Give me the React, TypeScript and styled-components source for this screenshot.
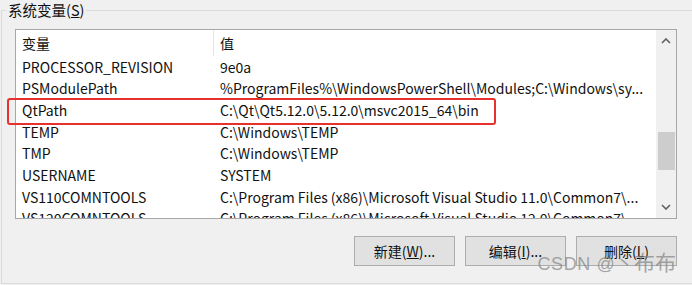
import styled, {createGlobalStyle} from 'styled-components'

const GlobalStyle = createGlobalStyle`
  html, body{
    margin: 0;
    padding: 0;
    background: #f0f0f0;
  }
  body{
    width: 692px;
    height: 285px;
    overflow: hidden;
    font-family: "Noto Sans CJK SC", "Noto Sans", sans-serif;
    color: #111;
  }
`

const rows: [string, string][] = [
  ['PROCESSOR_REVISION', '9e0a'],
  ['PSModulePath', '%ProgramFiles%\\WindowsPowerShell\\Modules;C:\\Windows\\sy...'],
  ['QtPath', 'C:\\Qt\\Qt5.12.0\\5.12.0\\msvc2015_64\\bin'],
  ['TEMP', 'C:\\Windows\\TEMP'],
  ['TMP', 'C:\\Windows\\TEMP'],
  ['USERNAME', 'SYSTEM'],
  ['VS110COMNTOOLS', 'C:\\Program Files (x86)\\Microsoft Visual Studio 11.0\\Common7\\...'],
  ['VS120COMNTOOLS', 'C:\\Program Files (x86)\\Microsoft Visual Studio 12.0\\Common7\\...'],
]

export default function App() {
  return (
    <Page>
      <GlobalStyle />
      <Group>
        <Legend>系统变量(<u>S</u>)</Legend>
        <Content>
          <ListBox>
            <Table>
              <HeaderRow>
                <NameCell>变量</NameCell>
                <ValueCell $divider>值</ValueCell>
              </HeaderRow>
              {rows.map(([name, value]) => (
                <Row key={name}>
                  <NameCell>{name}</NameCell>
                  <ValueCell>{value}</ValueCell>
                </Row>
              ))}
            </Table>
            <ScrollBar>
              <Arrow>
                <svg width="10" height="6" viewBox="0 0 10 6"><path d="M1 5 L5 1 L9 5" fill="none" stroke="#606060" strokeWidth="1.6"/></svg>
              </Arrow>
              <Track>
                <Thumb $offset={80} $size={38} />
              </Track>
              <Arrow>
                <svg width="10" height="6" viewBox="0 0 10 6"><path d="M1 1 L5 5 L9 1" fill="none" stroke="#606060" strokeWidth="1.6"/></svg>
              </Arrow>
            </ScrollBar>
          </ListBox>
          <Buttons>
            <Button>新建(<u>W</u>)...</Button>
            <Button>编辑(<u>I</u>)...</Button>
            <Button>删除(<u>L</u>)</Button>
          </Buttons>
        </Content>
      </Group>
      <Highlight />
      <Watermark>CSDN @丶<Big>布布</Big></Watermark>
    </Page>
  )
}

const Page = styled.div`
  position: relative;
  width: 692px;
  height: 285px;
`
const Group = styled.fieldset`
  box-sizing: border-box;
  margin: 0 0 0 1px;
  padding: 0;
  width: 700px;
  height: 284px;
  border: 1px solid #dcdcdc;
  min-width: 0;
`
const Legend = styled.legend`
  margin-left: 4px;
  padding: 0 2px;
  font-size: 14.5px;
  line-height: 20px;
  color: #111;
`
const Content = styled.div`
  padding: 9px 0 0 13px;
  display: flex;
  flex-direction: column;
`
const ListBox = styled.div`
  box-sizing: border-box;
  width: 662px;
  height: 190px;
  border: 1px solid #a7a7a7;
  background: #fff;
  display: flex;
  overflow: hidden;
`
const Table = styled.div`
  flex: 1;
  min-width: 0;
  display: flex;
  flex-direction: column;
  overflow: hidden;
`
const Row = styled.div`
  display: flex;
  flex: none;
  height: 21.67px;
  align-items: center;
  font-size: 14px;
  white-space: nowrap;
`
const HeaderRow = styled(Row)`
  height: 25.8px;
`
const NameCell = styled.div`
  box-sizing: border-box;
  width: 197px;
  flex: none;
  padding-left: 6px;
  overflow: hidden;
`
const ValueCell = styled.div<{$divider?: boolean}>`
  flex: 1;
  min-width: 0;
  align-self: stretch;
  display: flex;
  align-items: center;
  padding-left: 6px;
  overflow: hidden;
  text-overflow: ellipsis;
  border-left: 1px solid ${p => p.$divider ? '#e5e5e5' : 'transparent'};
`
const ScrollBar = styled.div`
  width: 20px;
  flex: none;
  background: #f0f0f0;
  display: flex;
  flex-direction: column;
`
const Arrow = styled.div`
  height: 22px;
  display: flex;
  align-items: center;
  justify-content: center;
`
const Track = styled.div`
  flex: 1;
  display: flex;
  flex-direction: column;
  align-items: center;
`
const Thumb = styled.div<{$offset: number; $size: number}>`
  width: 17px;
  margin-top: ${p => p.$offset}px;
  height: ${p => p.$size}px;
  background: #cdcdcd;
`
const Buttons = styled.div`
  width: 662px;
  margin-top: 17px;
  display: flex;
  justify-content: flex-end;
  gap: 10px;
`
const Button = styled.button`
  box-sizing: border-box;
  width: 101px;
  height: 30px;
  padding: 0;
  border: 1px solid #adadad;
  background: #e1e1e1;
  font-family: "Noto Sans CJK SC", "Noto Sans", sans-serif;
  font-size: 14px;
  color: #111;
`
const Highlight = styled.div`
  position: absolute;
  left: 7px;
  top: 98px;
  width: 489px;
  height: 27px;
  box-sizing: border-box;
  border: 2px solid #e8302c;
  border-radius: 3px;
`
const Watermark = styled.div`
  position: absolute;
  right: 16px;
  bottom: 9px;
  font-family: "Liberation Sans", "Noto Sans CJK SC", sans-serif;
  font-size: 18px;
  letter-spacing: 0.6px;
  color: rgba(130, 130, 130, 0.7);
  white-space: nowrap;
`
const Big = styled.span`
  font-size: 21px;
  letter-spacing: 0;
`
